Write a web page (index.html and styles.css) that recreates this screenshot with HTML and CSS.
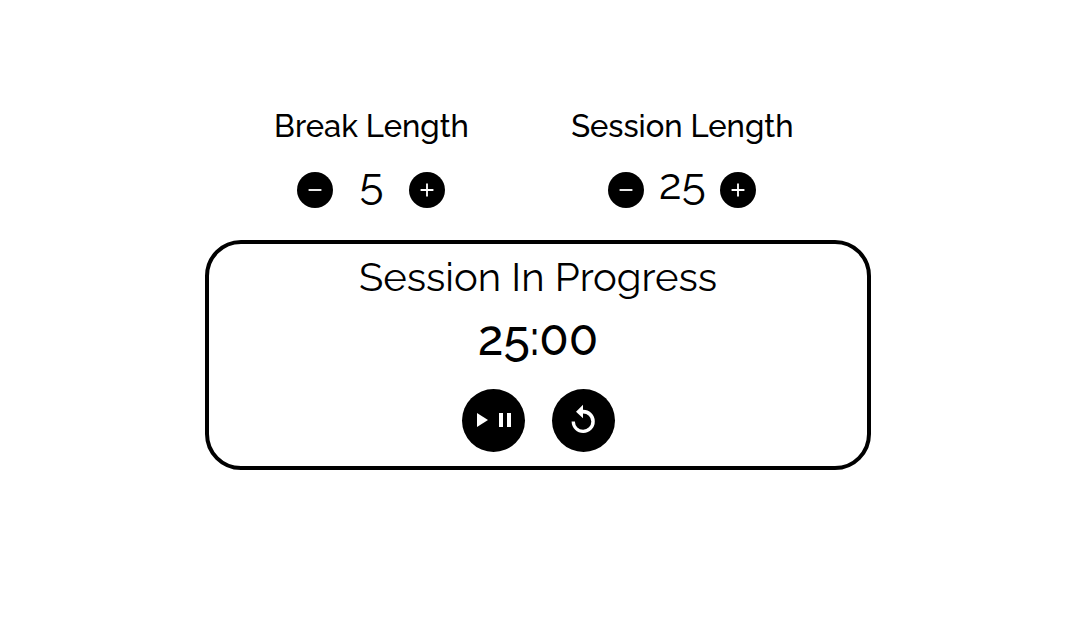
FILE: index.html
```html
<!DOCTYPE html>
<html lang="en">
<head>
<meta charset="utf-8">
<meta name="viewport" content="width=device-width, initial-scale=1">
<title>Session Timer</title>
<link rel="stylesheet" href="styles.css">
</head>
<body>
<main class="clock">
  <div class="settings">
    <section class="setting">
      <h2 class="setting-label" id="break-label">Break Length</h2>
      <div class="stepper" role="group" aria-labelledby="break-label">
        <button class="round" type="button" aria-label="Decrease break length"><svg class="icon-small" viewBox="0 0 24 24"><path d="M5 11h14v2H5z"/></svg></button>
        <output class="amount">5</output>
        <button class="round" type="button" aria-label="Increase break length"><svg class="icon-small" viewBox="0 0 24 24"><path d="M19 13h-6v6h-2v-6H5v-2h6V5h2v6h6v2z"/></svg></button>
      </div>
    </section>
    <section class="setting">
      <h2 class="setting-label" id="session-label">Session Length</h2>
      <div class="stepper" role="group" aria-labelledby="session-label">
        <button class="round" type="button" aria-label="Decrease session length"><svg class="icon-small" viewBox="0 0 24 24"><path d="M5 11h14v2H5z"/></svg></button>
        <output class="amount">25</output>
        <button class="round" type="button" aria-label="Increase session length"><svg class="icon-small" viewBox="0 0 24 24"><path d="M19 13h-6v6h-2v-6H5v-2h6V5h2v6h6v2z"/></svg></button>
      </div>
    </section>
  </div>
  <section class="timer">
    <h1 class="status">Session In Progress</h1>
    <div class="time" role="timer">25:00</div>
    <div class="controls">
      <button class="round round-large" type="button" aria-label="Start or pause">
        <svg class="icon-large" viewBox="0 1 24 24"><path d="M8 5v14l11-7z"/></svg>
        <svg class="icon-large" viewBox="0 1 24 24"><path d="M6 19h4V5H6v14zm8-14v14h4V5h-4z"/></svg>
      </button>
      <button class="round round-large" type="button" aria-label="Reset">
        <svg class="icon-reset" viewBox="0 0 34 34"><path d="M17 .8v5A11.6 11.6 0 1 1 5.6 17.6h3.3A8.2 8.2 0 1 0 17 9.4v4.8L10 7.7z"/></svg>
      </button>
    </div>
  </section>
</main>
</body>
</html>
```
FILE: styles.css
```css
* {
  box-sizing: border-box;
}

body {
  margin: 0;
  padding: 104px 15px 0 0;
  background: #fff;
  color: #000;
  font-family: Raleway, Lato, sans-serif;
}

.clock {
  width: 61.9%;
  min-width: 520px;
  margin: 0 auto;
}

.settings {
  display: grid;
  grid-template-columns: 15fr 13fr 2fr;
}

.setting {
  text-align: center;
}

.setting-label {
  margin: 0;
  font-size: 31px;
  line-height: 44px;
  font-weight: 500;
  white-space: nowrap;
}

.stepper {
  display: flex;
  justify-content: center;
  align-items: center;
  margin-top: 16px;
}

.amount {
  width: 76px;
  margin-bottom: 8px;
  font-size: 44px;
  line-height: 40px;
  font-weight: 400;
}

.round {
  display: flex;
  flex: none;
  justify-content: center;
  align-items: center;
  width: 36px;
  height: 36px;
  margin: 4px 0 0;
  padding: 0;
  border: 0;
  border-radius: 50%;
  background: #000;
  cursor: pointer;
}

svg {
  flex: none;
  fill: #fff;
}

.icon-small {
  width: 22px;
  height: 22px;
}

.timer {
  margin-top: 28px;
  padding: 9px 0 14px;
  border: 4px solid #000;
  border-radius: 36px;
  text-align: center;
}

.status {
  margin: 0;
  font-size: 40px;
  line-height: 48px;
  font-weight: 400;
}

.time {
  margin-top: 9px;
  font-size: 48px;
  line-height: 56px;
  font-weight: 500;
}

.controls {
  display: flex;
  justify-content: center;
  gap: 27px;
  margin-top: 19px;
}

.round-large {
  width: 63px;
  height: 63px;
}

.icon-large {
  width: 24px;
  height: 24px;
}

.icon-reset {
  width: 34px;
  height: 34px;
}
```
